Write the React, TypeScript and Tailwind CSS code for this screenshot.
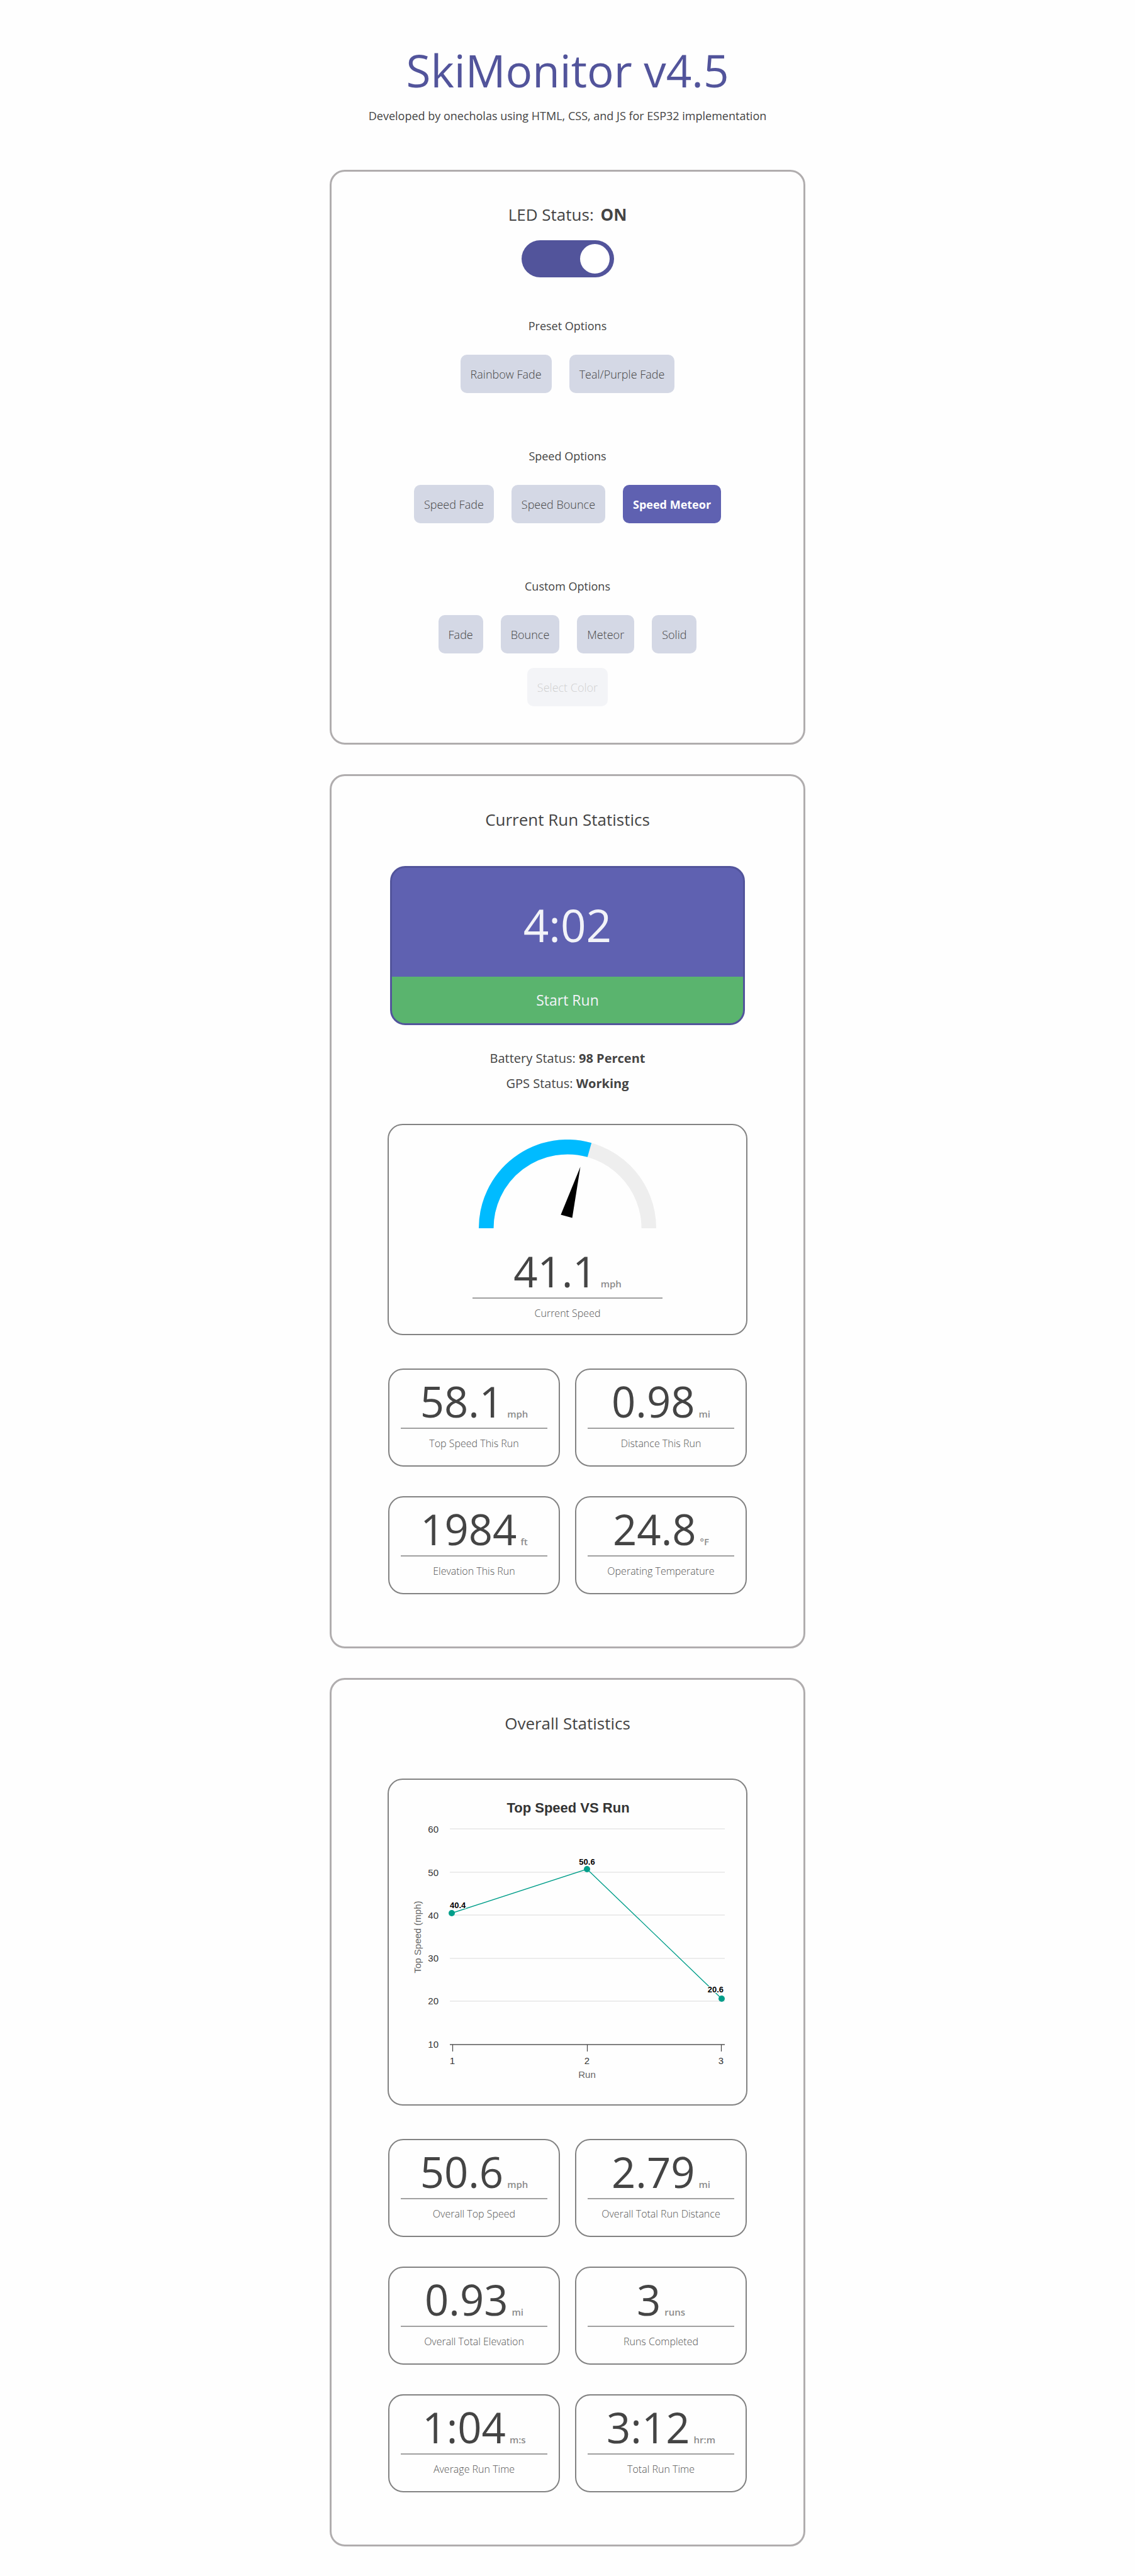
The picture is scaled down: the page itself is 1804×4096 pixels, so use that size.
import { useState, type ReactNode } from "react";

type Stat = { value: string; unit: string; label: string };

const currentStats: Stat[] = [
  { value: "58.1", unit: "mph", label: "Top Speed This Run" },
  { value: "0.98", unit: "mi", label: "Distance This Run" },
  { value: "1984", unit: "ft", label: "Elevation This Run" },
  { value: "24.8", unit: "°F", label: "Operating Temperature" },
];

const overallStats: Stat[] = [
  { value: "50.6", unit: "mph", label: "Overall Top Speed" },
  { value: "2.79", unit: "mi", label: "Overall Total Run Distance" },
  { value: "0.93", unit: "mi", label: "Overall Total Elevation" },
  { value: "3", unit: "runs", label: "Runs Completed" },
  { value: "1:04", unit: "m:s", label: "Average Run Time" },
  { value: "3:12", unit: "hr:m", label: "Total Run Time" },
];

const optionGroups = [
  { title: "Preset Options", names: ["Rainbow Fade", "Teal/Purple Fade"] },
  { title: "Speed Options", names: ["Speed Fade", "Speed Bounce", "Speed Meteor"] },
  { title: "Custom Options", names: ["Fade", "Bounce", "Meteor", "Solid"] },
];

function Panel({ children }: { children: ReactNode }) {
  return (
    <section className="flex w-full max-w-[756px] flex-col items-center rounded-3xl border-3 border-[#b0adae]">
      {children}
    </section>
  );
}

function Reading({ value, unit, label }: Stat) {
  return (
    <>
      <p className="flex items-baseline justify-center gap-[6px] border-b-2 border-[#a0a0a0] pb-[2px] text-[67px] leading-[80px] text-[#444]">
        {value}
        <span className="text-[15px] leading-6 font-semibold text-[#8c8c8c]">{unit}</span>
      </p>
      <p className="pt-[11px] text-center text-base leading-6 font-light text-[#555]">{label}</p>
    </>
  );
}

function StatGrid({ stats }: { stats: Stat[] }) {
  return (
    <div className="mt-[53px] grid w-full max-w-[570px] grid-cols-2 gap-x-6 gap-y-[47px]">
      {stats.map((s) => (
        <div key={s.label} className="rounded-3xl border-2 border-[#828282] px-[18px] pt-[10px] pb-[23px]">
          <Reading {...s} />
        </div>
      ))}
    </div>
  );
}

function Gauge() {
  return (
    <svg viewBox="-150 -150 300 150" className="mx-auto h-[141px] w-[282px]" role="img" aria-label="Speed gauge">
      <path d="M-137.5 0A137.5 137.5 0 0 1 137.5 0" fill="none" stroke="#eeeeee" strokeWidth="25" />
      <path d="M-137.5 0A137.5 137.5 0 0 1 37.2 -132.4" fill="none" stroke="#00bbff" strokeWidth="25" />
      <path d="M21.8 -104L-11.3 -22.9L8 -17.5Z" fill="#000" />
    </svg>
  );
}

const points = [
  { x: 100, y: 212, text: "40.4", tx: 97, ty: 204, anchor: "start" as const },
  { x: 315, y: 142, text: "50.6", tx: 315, ty: 135, anchor: "middle" as const },
  { x: 529, y: 348, text: "20.6", tx: 532, ty: 338, anchor: "end" as const },
];

function SpeedChart() {
  return (
    <svg viewBox="0 0 568 516" className="block w-full font-['Liberation_Sans',Arial,sans-serif]" role="img" aria-label="Top Speed VS Run">
      <text x="285" y="52" textAnchor="middle" fontSize="22" fontWeight="700" fill="#333">Top Speed VS Run</text>
      {[60, 50, 40, 30, 20].map((v, i) => (
        <g key={v}>
          <rect x="97" y={[77, 146, 214, 283, 351][i]} width="437" height="2" fill="#ececec" />
          <text x="79" y={[84, 153, 221, 289, 357][i]} textAnchor="end" fontSize="15" fill="#333">{v}</text>
        </g>
      ))}
      <path d="M97 421H534" stroke="#555" strokeWidth="1.6" />
      <text x="79" y="426" textAnchor="end" fontSize="15" fill="#333">10</text>
      {[101, 315, 528].map((x, i) => (
        <g key={x}>
          <path d={`M${x}.5 421V432`} stroke="#444" strokeWidth="1.2" />
          <text x={x} y="452" textAnchor="middle" fontSize="15" fill="#333">{i + 1}</text>
        </g>
      ))}
      <text x="315" y="474" textAnchor="middle" fontSize="15" fill="#666">Run</text>
      <text transform="translate(51 250) rotate(-90)" textAnchor="middle" fontSize="15" fill="#666">Top Speed (mph)</text>
      <polyline points="100,212 315,142 529,348" fill="none" stroke="#009e8a" strokeWidth="1.4" />
      {points.map((p) => (
        <g key={p.text}>
          <circle cx={p.x} cy={p.y} r="5" fill="#009e8a" />
          <text x={p.tx} y={p.ty} textAnchor={p.anchor} fontSize="13" fontWeight="700" fill="#000" stroke="#fefefe" strokeWidth="2" paintOrder="stroke">
            {p.text}
          </text>
        </g>
      ))}
    </svg>
  );
}

export default function App() {
  const [on, setOn] = useState(true);
  const [active, setActive] = useState("Speed Meteor");
  const base = "h-[61px] rounded-[10px] px-4 text-lg";

  return (
    <main className="flex flex-col items-center bg-[#fefefe] pt-[62px] pb-[47px] font-['Open_Sans','Noto_Sans',sans-serif] text-[#444]">
      <h1 className="text-center text-[71px] leading-[100px] text-[#52549b]">SkiMonitor v4.5</h1>
      <p className="mt-2 mb-[72px] text-center text-lg leading-7">
        Developed by onecholas using HTML, CSS, and JS for ESP32 implementation
      </p>

      <div className="flex w-full flex-col items-center gap-[47px]">
        <Panel>
          <label htmlFor="led" className="mt-[50px] text-[26px] leading-9">
            LED Status: <b className="ml-1">{on ? "ON" : "OFF"}</b>
          </label>
          <input
            id="led"
            type="checkbox"
            role="switch"
            checked={on}
            onChange={() => setOn(!on)}
            className="mt-[23px] flex h-[59px] w-[147px] cursor-pointer appearance-none items-center justify-start rounded-full bg-[#d4d8e5] px-[7px] before:size-[47px] before:rounded-full before:bg-white before:content-[''] checked:justify-end checked:bg-[#52549b]"
          />
          <div className="mt-[63px] flex flex-col items-center gap-[86px]">
            {optionGroups.map((g) => (
              <div key={g.title} className="flex flex-col items-center">
                <h2 className="mb-8 text-lg leading-7">{g.title}</h2>
                <div className="flex flex-wrap justify-center gap-7">
                  {g.names.map((n) => (
                    <button
                      key={n}
                      type="button"
                      aria-pressed={n === active}
                      onClick={() => setActive(n)}
                      className={n === active ? `${base} bg-[#5f61b1] font-bold text-white` : `${base} bg-[#d4d8e5] font-light`}
                    >
                      {n}
                    </button>
                  ))}
                </div>
              </div>
            ))}
          </div>
          <button type="button" disabled className={`${base} mt-[23px] mb-[58px] bg-[#d4d8e5] font-light opacity-25`}>
            Select Color
          </button>
        </Panel>

        <Panel>
          <h2 className="mt-[51px] text-[26px] leading-9">Current Run Statistics</h2>
          <div className="mt-14 w-full max-w-[564px] overflow-hidden rounded-3xl border-3 border-[#52549b] bg-[#5f61b1] text-center text-[#f2f3f8]">
            <p className="h-[173px] pt-2 text-[71px] leading-[165px]">4:02</p>
            <button type="button" className="h-[74px] w-full bg-[#5ab46e] text-[23px]">Start Run</button>
          </div>
          <div className="mt-[33px] text-center text-xl leading-10">
            <p>Battery Status: <b>98 Percent</b></p>
            <p>GPS Status: <b>Working</b></p>
          </div>
          <div className="mt-11 w-full max-w-[572px] rounded-3xl border-2 border-[#828282] pt-[23px] pb-[21px]">
            <Gauge />
            <div className="mx-auto mt-7 w-[302px]">
              <Reading value="41.1" unit="mph" label="Current Speed" />
            </div>
          </div>
          <StatGrid stats={currentStats} />
          <div className="h-[83px]" />
        </Panel>

        <Panel>
          <h2 className="mt-[51px] text-[26px] leading-9">Overall Statistics</h2>
          <div className="mt-[70px] w-full max-w-[572px] rounded-3xl border-2 border-[#828282]">
            <SpeedChart />
          </div>
          <StatGrid stats={overallStats} />
          <div className="h-[83px]" />
        </Panel>
      </div>
    </main>
  );
}
